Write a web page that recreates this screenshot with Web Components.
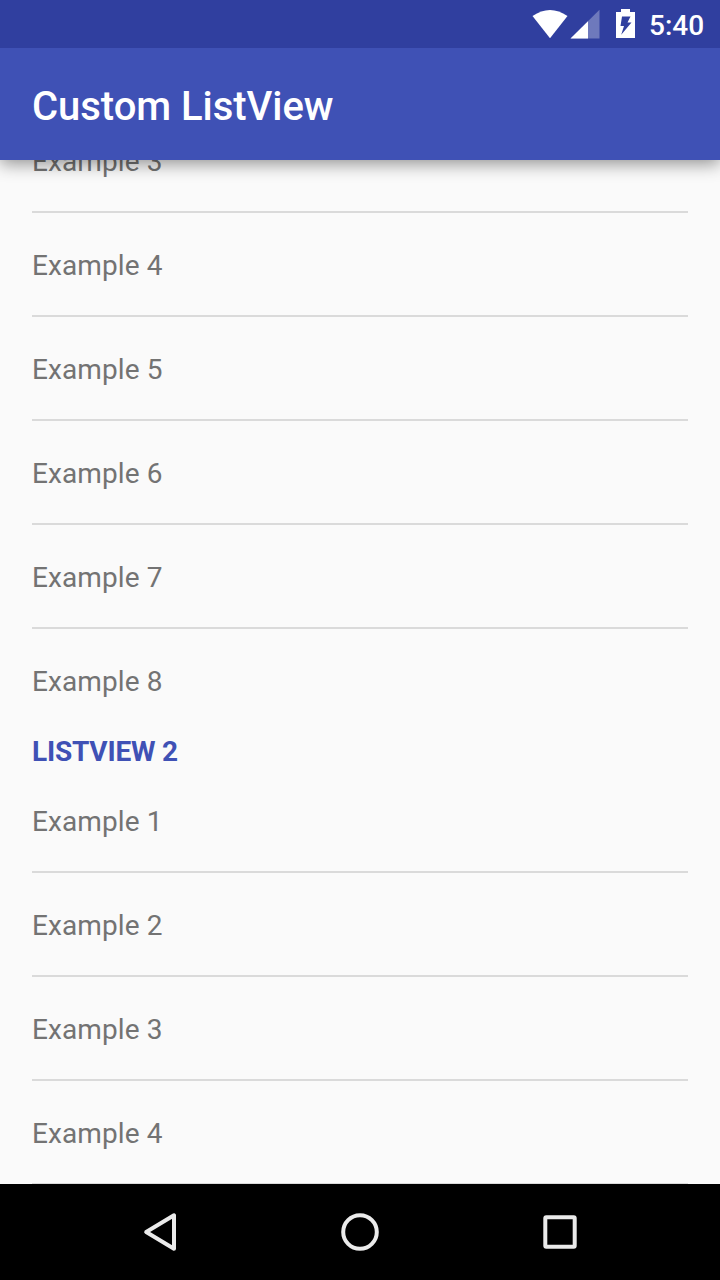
<!DOCTYPE html>
<html lang="en"><head><meta charset="utf-8"><title>Custom ListView</title>
<style>html,body{margin:0;padding:0}body{font-family:Roboto,sans-serif;width:720px;height:1280px;overflow:hidden}</style></head>
<body>
<app-screen></app-screen>
<script>
const define=(name,html,init)=>customElements.define(name,class extends HTMLElement{
  constructor(){super();this.attachShadow({mode:'open'}).innerHTML=html}
  connectedCallback(){if(init)init(this)}
});
define('status-bar',`<style>
:host{display:flex;height:48px;background:#303f9f;color:#fff;justify-content:flex-end;align-items:center;box-sizing:border-box;padding-right:16px;flex:none;z-index:2}
svg{width:110px;height:48px;display:block}
span{font-size:28px;font-weight:500;line-height:48px;padding-top:3px;margin-left:9px;width:55px;white-space:nowrap}
</style><svg viewBox="530 0 110 48" fill="#fff"><path d="M532.5 16Q550 4 567.500 16L550 38.300Z"/><path d="M599.500 9.700V38.500H570.500Z" opacity=".3"/><path d="M588 21.300V38.500H570.500Z"/><path fill-rule="evenodd" d="M621 9h9v3h5v26h-19V12h5zM622 16.500H630.500L627.500 22.500H631.500L621.200 34.700L624 26H620.500z"/></svg><span><slot></slot></span>`);
define('app-bar',`<style>
:host{display:flex;height:112px;background:#3f51b5;color:#fff;align-items:center;box-sizing:border-box;padding:6px 32px 0;flex:none;box-shadow:0 4px 16px rgba(0,0,0,.42);z-index:1}
span{font-size:40px;font-weight:500;line-height:48px;letter-spacing:-.04px}
</style><span><slot></slot></span>`);
define('list-item',`<style>
:host{display:block;height:102px;border-bottom:2px solid #dadada;color:#737373;font-size:28px;letter-spacing:.11px}
:host([last]){height:104px;border-bottom:0}
span{display:block;padding-top:3px;line-height:100px}
</style><span><slot></slot></span>`);
define('list-section',`<style>
:host{display:block}
h2{margin:0;height:36px;font-size:28px;line-height:38px;font-weight:700;color:#3f51b5;letter-spacing:-.2px}
</style><slot></slot>`,e=>{
  if(!e.hasAttribute('heading'))return;
  const h=document.createElement('h2');h.textContent=e.getAttribute('heading');
  e.shadowRoot.insertBefore(h,e.shadowRoot.querySelector('slot'));
});
define('nav-bar',`<style>
:host{display:flex;height:96px;background:#000;flex:none;justify-content:center;align-items:center}
svg{width:200px;height:96px;fill:none;stroke:#ebebeb;stroke-width:4}
</style><svg viewBox="0 0 200 96"><path stroke-linejoin="round" d="M114 31.300v33.400L86.200 48z"/></svg><svg viewBox="0 0 200 96"><circle cx="100" cy="48" r="16.800"/></svg><svg viewBox="0 0 200 96"><rect x="85.300" y="33.300" width="29.400" height="29.400" rx="1"/></svg>`);
define('app-screen',`<style>
:host{display:flex;flex-direction:column;width:720px;height:1280px;background:#fafafa}
main{flex:1;min-height:0;overflow:hidden;padding:0 32px}
.scroll{margin-top:-51px}
</style><status-bar>5:40</status-bar><app-bar>Custom ListView</app-bar><main><div class="scroll">
<list-section><list-item>Example 3</list-item><list-item>Example 4</list-item><list-item>Example 5</list-item><list-item>Example 6</list-item><list-item>Example 7</list-item><list-item last>Example 8</list-item></list-section>
<list-section heading="LISTVIEW 2"><list-item>Example 1</list-item><list-item>Example 2</list-item><list-item>Example 3</list-item><list-item>Example 4</list-item></list-section>
</div></main><nav-bar></nav-bar>`);
</script></body></html>
